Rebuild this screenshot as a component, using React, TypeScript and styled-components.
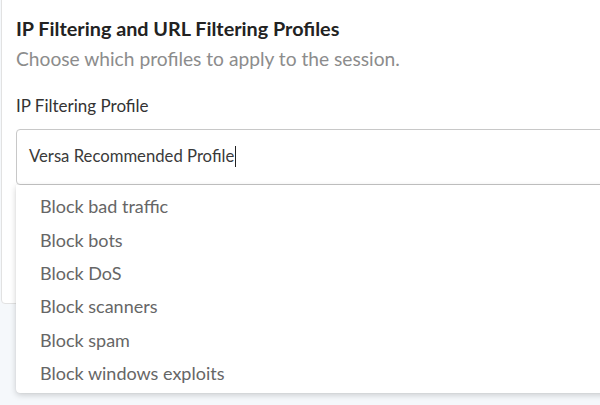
import React from "react";
import styled, { createGlobalStyle } from "styled-components";

const Global = createGlobalStyle`
  html, body { margin: 0; padding: 0; }
  body {
    background: #f5f8fb;
    font-family: Lato, "Open Sans", sans-serif;
    width: 600px;
    height: 405px;
    overflow: hidden;
  }
`;

const Card = styled.div`
  position: relative;
  margin-left: 1px;
  margin-top: -10px;
  width: 700px;
  height: 314px;
  box-sizing: border-box;
  background: #fff;
  border: 1px solid #e2e2e2;
  border-radius: 4px;
  padding: 25.8px 0 0 14px;
`;

const Title = styled.h2`
  margin: 0;
  font-size: 19.8px;
  line-height: 23px;
  font-weight: 700;
  color: #222;
`;

const Subtitle = styled.p`
  margin: 7.7px 0 0;
  font-size: 19.2px;
  line-height: 24px;
  color: #8c8c8c;
`;

const Label = styled.div`
  margin-top: 24.4px;
  font-size: 17px;
  line-height: 20px;
  color: #333;
`;

const Field = styled.div`
  position: relative;
  margin-top: 13px;
`;

const InputBox = styled.div`
  height: 56px;
  box-sizing: border-box;
  border: 1px solid #c8c8c8;
  border-radius: 4px;
  display: flex;
  align-items: center;
  padding-left: 12px;
  font-size: 16.7px;
  color: #3a3a3a;
`;

const Caret = styled.span`
  display: inline-block;
  width: 1px;
  height: 21px;
  background: #222;
  margin-left: 1px;
  vertical-align: -5px;
`;

const Menu = styled.ul`
  position: absolute;
  top: 56px;
  left: 0;
  width: 700px;
  margin: 0;
  padding: 4.7px 0 3.3px 0;
  list-style: none;
  background: #fff;
  border-radius: 0 0 4px 4px;
  box-shadow: 0 2px 6px rgba(0, 0, 0, 0.18), 0 0 1px rgba(0, 0, 0, 0.15);
`;

const Item = styled.li`
  height: 33.33px;
  display: flex;
  align-items: center;
  padding-left: 24px;
  font-size: 18px;
  color: #666;
`;

const items = [
  "Block bad traffic",
  "Block bots",
  "Block DoS",
  "Block scanners",
  "Block spam",
  "Block windows exploits",
];

export default function App() {
  return (
    <>
      <Global />
      <Card>
        <Title>IP Filtering and URL Filtering Profiles</Title>
        <Subtitle>Choose which profiles to apply to the session.</Subtitle>
        <Label>IP Filtering Profile</Label>
        <Field>
          <InputBox>
            <span>
              Versa Recommended Profile
              <Caret />
            </span>
          </InputBox>
          <Menu>
            {items.map((t) => (
              <Item key={t}>{t}</Item>
            ))}
          </Menu>
        </Field>
      </Card>
    </>
  );
}
